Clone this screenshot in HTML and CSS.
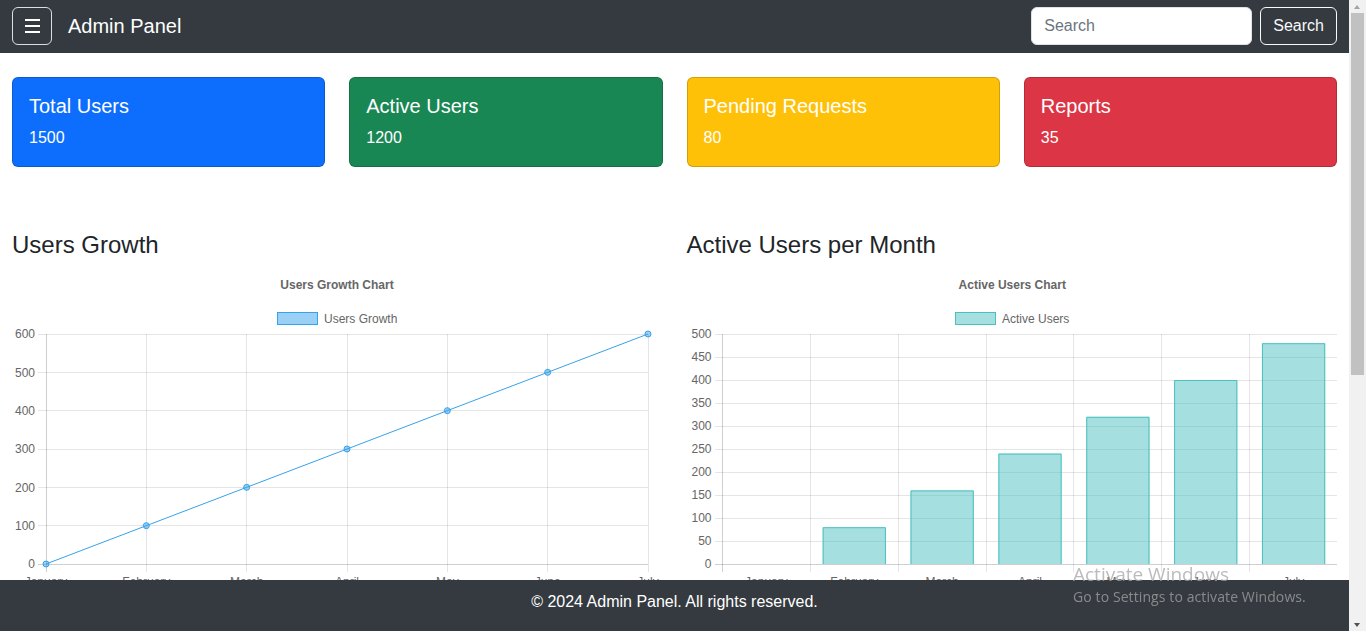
FILE: index.html
```html
<!DOCTYPE html>
<html lang="en">
<head>
<meta charset="utf-8">
<title>Admin Panel</title>
<link rel="stylesheet" href="styles.css">
</head>
<body>
<div class="page">
<nav class="navbar">
  <div class="nav-left">
    <button class="toggler" type="button" aria-label="Toggle navigation">
      <svg width="15" height="14" viewBox="0 0 15 14"><path d="M0 1H15M0 7H15M0 13H15" stroke="#fff" stroke-width="2"/></svg>
    </button>
    <a class="brand" href="#">Admin Panel</a>
  </div>
  <form class="search">
    <input class="search-input" type="search" placeholder="Search">
    <button class="btn-outline" type="button">Search</button>
  </form>
</nav>

<main class="container">
  <div class="stats">
    <div class="card card-primary"><h5 class="card-title">Total Users</h5><p class="card-text">1500</p></div>
    <div class="card card-success"><h5 class="card-title">Active Users</h5><p class="card-text">1200</p></div>
    <div class="card card-warning"><h5 class="card-title">Pending Requests</h5><p class="card-text">80</p></div>
    <div class="card card-danger"><h5 class="card-title">Reports</h5><p class="card-text">35</p></div>
  </div>

  <div class="charts">
    <section class="chart-col">
      <h4 class="chart-heading">Users Growth</h4>
      <svg class="chart" viewBox="0 0 650.5 325" width="650.5" height="325">
        <text class="c-title" x="325" y="21" text-anchor="middle">Users Growth Chart</text>
        <rect x="265.5" y="44.5" width="40" height="12" fill="rgba(54,162,235,0.5)" stroke="#36a2eb"/>
        <text class="c-tick" x="312" y="54.5">Users Growth</text>
        <g class="grid" shape-rendering="crispEdges">
          <line x1="26" y1="66" x2="636" y2="66"/>
          <line x1="26" y1="104.33" x2="636" y2="104.33"/>
          <line x1="26" y1="142.67" x2="636" y2="142.67"/>
          <line x1="26" y1="181" x2="636" y2="181"/>
          <line x1="26" y1="219.33" x2="636" y2="219.33"/>
          <line x1="26" y1="257.67" x2="636" y2="257.67"/>
          <line x1="134.33" y1="66" x2="134.33" y2="304"/>
          <line x1="234.67" y1="66" x2="234.67" y2="304"/>
          <line x1="335" y1="66" x2="335" y2="304"/>
          <line x1="435.33" y1="66" x2="435.33" y2="304"/>
          <line x1="535.67" y1="66" x2="535.67" y2="304"/>
          <line x1="636" y1="66" x2="636" y2="304"/>
        </g>
        <g class="axis" shape-rendering="crispEdges">
          <line x1="26" y1="296" x2="636" y2="296"/>
          <line x1="34" y1="66" x2="34" y2="304"/>
        </g>
        <g class="c-tick" text-anchor="end">
          <text x="23" y="70.3">600</text>
          <text x="23" y="108.6">500</text>
          <text x="23" y="147">400</text>
          <text x="23" y="185.3">300</text>
          <text x="23" y="223.6">200</text>
          <text x="23" y="262">100</text>
          <text x="23" y="300.3">0</text>
        </g>
        <g class="c-tick" text-anchor="middle">
          <text x="34" y="317.5">January</text>
          <text x="134.33" y="317.5">February</text>
          <text x="234.67" y="317.5">March</text>
          <text x="335" y="317.5">April</text>
          <text x="435.33" y="317.5">May</text>
          <text x="535.67" y="317.5">June</text>
          <text x="636" y="317.5">July</text>
        </g>
        <polyline points="34,296 134.33,257.67 234.67,219.33 335,181 435.33,142.67 535.67,104.33 636,66" fill="none" stroke="#36a2eb" stroke-width="1"/>
        <g fill="rgba(54,162,235,0.5)" stroke="#36a2eb" stroke-width="1">
          <circle cx="34" cy="296" r="3"/>
          <circle cx="134.33" cy="257.67" r="3"/>
          <circle cx="234.67" cy="219.33" r="3"/>
          <circle cx="335" cy="181" r="3"/>
          <circle cx="435.33" cy="142.67" r="3"/>
          <circle cx="535.67" cy="104.33" r="3"/>
          <circle cx="636" cy="66" r="3"/>
        </g>
      </svg>
    </section>

    <section class="chart-col">
      <h4 class="chart-heading">Active Users per Month</h4>
      <svg class="chart" viewBox="0 0 650.5 325" width="650.5" height="325">
        <text class="c-title" x="325.25" y="21" text-anchor="middle">Active Users Chart</text>
        <rect x="268.5" y="44.5" width="40" height="12" fill="rgba(75,192,192,0.5)" stroke="#4bc0c0"/>
        <text class="c-tick" x="315" y="54.5">Active Users</text>
        <g class="grid" shape-rendering="crispEdges">
          <line x1="27.5" y1="66" x2="650.5" y2="66"/>
          <line x1="27.5" y1="89" x2="650.5" y2="89"/>
          <line x1="27.5" y1="112" x2="650.5" y2="112"/>
          <line x1="27.5" y1="135" x2="650.5" y2="135"/>
          <line x1="27.5" y1="158" x2="650.5" y2="158"/>
          <line x1="27.5" y1="181" x2="650.5" y2="181"/>
          <line x1="27.5" y1="204" x2="650.5" y2="204"/>
          <line x1="27.5" y1="227" x2="650.5" y2="227"/>
          <line x1="27.5" y1="250" x2="650.5" y2="250"/>
          <line x1="27.5" y1="273" x2="650.5" y2="273"/>
          <line x1="123.36" y1="66" x2="123.36" y2="304"/>
          <line x1="211.21" y1="66" x2="211.21" y2="304"/>
          <line x1="299.07" y1="66" x2="299.07" y2="304"/>
          <line x1="386.93" y1="66" x2="386.93" y2="304"/>
          <line x1="474.79" y1="66" x2="474.79" y2="304"/>
          <line x1="562.64" y1="66" x2="562.64" y2="304"/>
          <line x1="650" y1="66" x2="650" y2="304"/>
        </g>
        <g fill="rgba(75,192,192,0.5)" stroke="#4bc0c0" stroke-width="1">
          <path d="M135.66 296V259.2H198.92V296Z" stroke="none"/>
          <path d="M223.51 296V222.4H286.77V296Z" stroke="none"/>
          <path d="M311.37 296V185.6H374.63V296Z" stroke="none"/>
          <path d="M399.23 296V148.8H462.49V296Z" stroke="none"/>
          <path d="M487.08 296V112H550.34V296Z" stroke="none"/>
          <path d="M574.94 296V75.2H638.2V296Z" stroke="none"/>
          <path d="M136.16 296V259.7H198.42V296" fill="none"/>
          <path d="M224.01 296V222.9H286.27V296" fill="none"/>
          <path d="M311.87 296V186.1H374.13V296" fill="none"/>
          <path d="M399.73 296V149.3H461.99V296" fill="none"/>
          <path d="M487.58 296V112.5H549.84V296" fill="none"/>
          <path d="M575.44 296V75.7H637.7V296" fill="none"/>
        </g>
        <g class="axis" shape-rendering="crispEdges">
          <line x1="27.5" y1="296" x2="650.5" y2="296"/>
          <line x1="35.5" y1="66" x2="35.5" y2="304"/>
        </g>
        <g class="c-tick" text-anchor="end">
          <text x="24.5" y="70.3">500</text>
          <text x="24.5" y="93.3">450</text>
          <text x="24.5" y="116.3">400</text>
          <text x="24.5" y="139.3">350</text>
          <text x="24.5" y="162.3">300</text>
          <text x="24.5" y="185.3">250</text>
          <text x="24.5" y="208.3">200</text>
          <text x="24.5" y="231.3">150</text>
          <text x="24.5" y="254.3">100</text>
          <text x="24.5" y="277.3">50</text>
          <text x="24.5" y="300.3">0</text>
        </g>
        <g class="c-tick" text-anchor="middle">
          <text x="79.43" y="317.5">January</text>
          <text x="167.29" y="317.5">February</text>
          <text x="255.14" y="317.5">March</text>
          <text x="343" y="317.5">April</text>
          <text x="430.86" y="317.5">May</text>
          <text x="518.71" y="317.5">June</text>
          <text x="606.57" y="317.5">July</text>
        </g>
      </svg>
    </section>
  </div>
</main>

<footer class="footer">
  <p>© 2024 Admin Panel. All rights reserved.</p>
</footer>
</div>

<div class="scrollbar" aria-hidden="true">
  <span class="sb-arrow sb-up"></span>
  <span class="sb-track"><span class="sb-thumb"></span></span>
  <span class="sb-arrow sb-down"></span>
</div>

<div class="watermark">
  <div class="wm-title">Activate Windows</div>
  <div class="wm-sub">Go to Settings to activate Windows.</div>
</div>
</body>
</html>
```

FILE: styles.css
```css
* {
  box-sizing: border-box;
}

html {
  overflow: hidden;
}

body {
  margin: 0;
  font-family: "Liberation Sans", Arial, sans-serif;
  font-size: 16px;
  line-height: 1.5;
  color: #212529;
  background: #fff;
}

.page {
  width: calc(100% - 17px);
}

.navbar {
  height: 53px;
  background: #343a40;
  padding: 7px 12px 0;
  display: flex;
  align-items: flex-start;
  justify-content: space-between;
}

.nav-left {
  display: flex;
  align-items: flex-start;
  gap: 16px;
}

.toggler {
  width: 40px;
  height: 38px;
  border: 1px solid #dcdfe2;
  border-radius: 6px;
  background: transparent;
  display: flex;
  align-items: center;
  justify-content: center;
  padding: 0;
}

.brand {
  margin-top: 4px;
  color: #fff;
  font-size: 20px;
  line-height: 30px;
  text-decoration: none;
}

.search {
  display: flex;
  gap: 8px;
  margin: 0;
}

.search-input {
  width: 221px;
  height: 38px;
  padding: 6px 12px;
  font: inherit;
  font-size: 16px;
  line-height: 23px;
  color: #212529;
  background: #fff;
  border: 1px solid #dee2e6;
  border-radius: 6px;
  outline: none;
}

.search-input::placeholder {
  color: #6c757d;
}

.btn-outline {
  height: 38px;
  padding: 5px 12px 6px;
  font: inherit;
  font-size: 16px;
  line-height: 24px;
  color: #f8f9fa;
  background: transparent;
  border: 1px solid #f8f9fa;
  border-radius: 6px;
}

.container {
  padding: 24px 12px 460px;
}

.stats {
  display: grid;
  grid-template-columns: repeat(4, 1fr);
  gap: 24px;
}

.card {
  height: 90px;
  padding: 16px;
  border: 1px solid rgba(0, 0, 0, 0.175);
  border-radius: 6px;
  color: #fff;
}

.card-primary { background: #0d6efd; }
.card-success { background: #198754; }
.card-warning { background: #ffc107; }
.card-danger { background: #dc3545; }

.card-title {
  margin: 0 0 8px;
  font-size: 20px;
  font-weight: 500;
  line-height: 24px;
}

.card-text {
  margin: 0;
  font-size: 16px;
  line-height: 24px;
}

.charts {
  margin-top: 64px;
  display: grid;
  grid-template-columns: 1fr 1fr;
  gap: 24px;
}

.chart-heading {
  margin: 0 0 9px;
  font-size: 24px;
  font-weight: 500;
  line-height: 28px;
}

.chart {
  display: block;
  width: 100%;
  height: 325px;
}

.c-title {
  font-family: "Liberation Sans", Arial, sans-serif;
  font-size: 12px;
  font-weight: bold;
  fill: #666;
}

.c-tick {
  font-family: "Liberation Sans", Arial, sans-serif;
  font-size: 12px;
  fill: #666;
}

.grid line {
  stroke: rgba(0, 0, 0, 0.1);
  stroke-width: 1;
}

.axis line {
  stroke: rgba(0, 0, 0, 0.19);
  stroke-width: 1;
}

.footer {
  position: fixed;
  left: 0;
  right: 17px;
  bottom: 0;
  height: 51px;
  padding-top: 10px;
  background: #343a40;
  color: #fff;
  text-align: center;
}

.footer p {
  margin: 0;
  font-size: 16px;
  line-height: 24px;
}

.scrollbar {
  position: fixed;
  top: 0;
  right: 0;
  bottom: 0;
  width: 17px;
  background: #f1f1f1;
  display: flex;
  flex-direction: column;
}

.sb-arrow {
  height: 13px;
  flex: none;
  position: relative;
}

.sb-up::after,
.sb-down::after {
  content: "";
  position: absolute;
  left: 5px;
  border-left: 3.5px solid transparent;
  border-right: 3.5px solid transparent;
}

.sb-up::after {
  top: 5px;
  border-bottom: 4px solid #a3a3a3;
}

.sb-down::after {
  bottom: 4px;
  border-top: 4px solid #505050;
}

.sb-track {
  flex: 1;
  padding: 0 2px;
}

.sb-thumb {
  display: block;
  height: 362px;
  background: #c1c1c1;
}

.watermark {
  position: fixed;
  left: 1073px;
  top: 565px;
  font-family: "Open Sans", "Noto Sans", sans-serif;
  color: rgba(165, 165, 165, 0.75);
  pointer-events: none;
}

.wm-title {
  font-size: 19px;
  line-height: 19px;
}

.wm-sub {
  margin-top: 6px;
  font-size: 14px;
  line-height: 14px;
  letter-spacing: 0.1px;
}
```
